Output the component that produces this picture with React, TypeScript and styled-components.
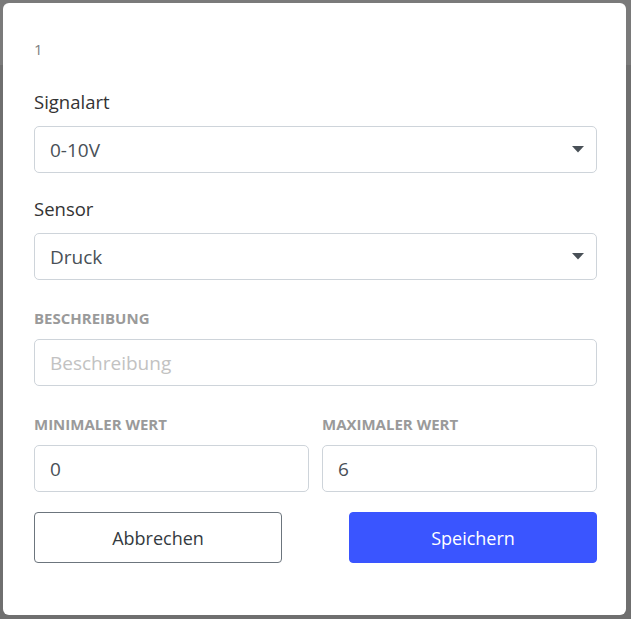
import React from "react";
import styled, { createGlobalStyle } from "styled-components";

const GlobalStyle = createGlobalStyle`
  html, body {
    margin: 0;
    padding: 0;
  }
  body {
    width: 631px;
    height: 619px;
    overflow: hidden;
    font-family: "Open Sans", "Noto Sans", sans-serif;
    background: linear-gradient(#7a7a7a 0 65px, #6f6f6f 65px);
  }
  * {
    box-sizing: border-box;
  }
`;

const Page = styled.div`
  padding: 3px 5px 4px 3px;
`;

const Modal = styled.section`
  width: 623px;
  height: 612px;
  background: #fff;
  border-radius: 6px;
  padding: 35px 29px 0 31px;
  display: flex;
  flex-direction: column;
`;

const Index = styled.div`
  font-size: 15px;
  line-height: 22px;
  color: #808080;
  margin-bottom: 28px;
`;

const Field = styled.div<{ $gap?: number }>`
  display: flex;
  flex-direction: column;
  margin-bottom: ${(p) => p.$gap ?? 0}px;
`;

const Label = styled.label`
  font-size: 18.5px;
  line-height: 27px;
  color: #333;
  margin-bottom: 11px;
`;

const SmallLabel = styled.label`
  font-size: 15px;
  line-height: 22px;
  font-weight: 700;
  color: #9a9a9a;
  text-transform: uppercase;
  margin-bottom: 10px;
`;

const SelectWrap = styled.div`
  position: relative;
`;

const Select = styled.select`
  appearance: none;
  width: 100%;
  height: 47px;
  border: 1px solid #ced4da;
  border-radius: 5px;
  background: #fff;
  padding: 0 40px 0 15px;
  font-family: inherit;
  font-size: 19px;
  color: #495057;
  outline: none;
`;

const Caret = styled.svg`
  position: absolute;
  right: 13px;
  top: 20px;
  pointer-events: none;
`;

const Input = styled.input`
  width: 100%;
  height: 47px;
  border: 1px solid #ced4da;
  border-radius: 5px;
  padding: 0 15px;
  font-family: inherit;
  font-size: 19px;
  color: #495057;
  outline: none;

  &::placeholder {
    color: #c2c2c2;
  }
`;

const Columns = styled.div`
  display: grid;
  grid-template-columns: 1fr 1fr;
  column-gap: 13px;
  margin-bottom: 20px;
`;

const Actions = styled.div`
  display: flex;
  justify-content: space-between;
`;

const Button = styled.button<{ $primary?: boolean }>`
  width: 248px;
  height: 51px;
  border-radius: 4px;
  font-family: inherit;
  font-size: 18px;
  cursor: pointer;
  border: 1px solid ${(p) => (p.$primary ? "#3a55ff" : "#6c757d")};
  background: ${(p) => (p.$primary ? "#3a55ff" : "#fff")};
  color: ${(p) => (p.$primary ? "#fff" : "#343a40")};
`;

function CaretIcon() {
  return (
    <Caret width="12" height="7" viewBox="0 0 12 7">
      <path d="M0 0h12L6 6.5z" fill="#495057" />
    </Caret>
  );
}

type SelectFieldProps = { label: string; value: string; options: string[]; gap: number };

function SelectField({ label, value, options, gap }: SelectFieldProps) {
  return (
    <Field $gap={gap}>
      <Label>{label}</Label>
      <SelectWrap>
        <Select defaultValue={value}>
          {options.map((o) => (
            <option key={o}>{o}</option>
          ))}
        </Select>
        <CaretIcon />
      </SelectWrap>
    </Field>
  );
}

export default function App() {
  return (
    <>
      <GlobalStyle />
      <Page>
        <Modal>
          <Index>1</Index>
          <SelectField label="Signalart" value="0-10V" options={["0-10V", "4-20mA"]} gap={22} />
          <SelectField label="Sensor" value="Druck" options={["Druck", "Temperatur"]} gap={27} />
          <Field $gap={27}>
            <SmallLabel>Beschreibung</SmallLabel>
            <Input placeholder="Beschreibung" />
          </Field>
          <Columns>
            <Field>
              <SmallLabel>Minimaler Wert</SmallLabel>
              <Input defaultValue="0" />
            </Field>
            <Field>
              <SmallLabel>Maximaler Wert</SmallLabel>
              <Input defaultValue="6" />
            </Field>
          </Columns>
          <Actions>
            <Button>Abbrechen</Button>
            <Button $primary>Speichern</Button>
          </Actions>
        </Modal>
      </Page>
    </>
  );
}
